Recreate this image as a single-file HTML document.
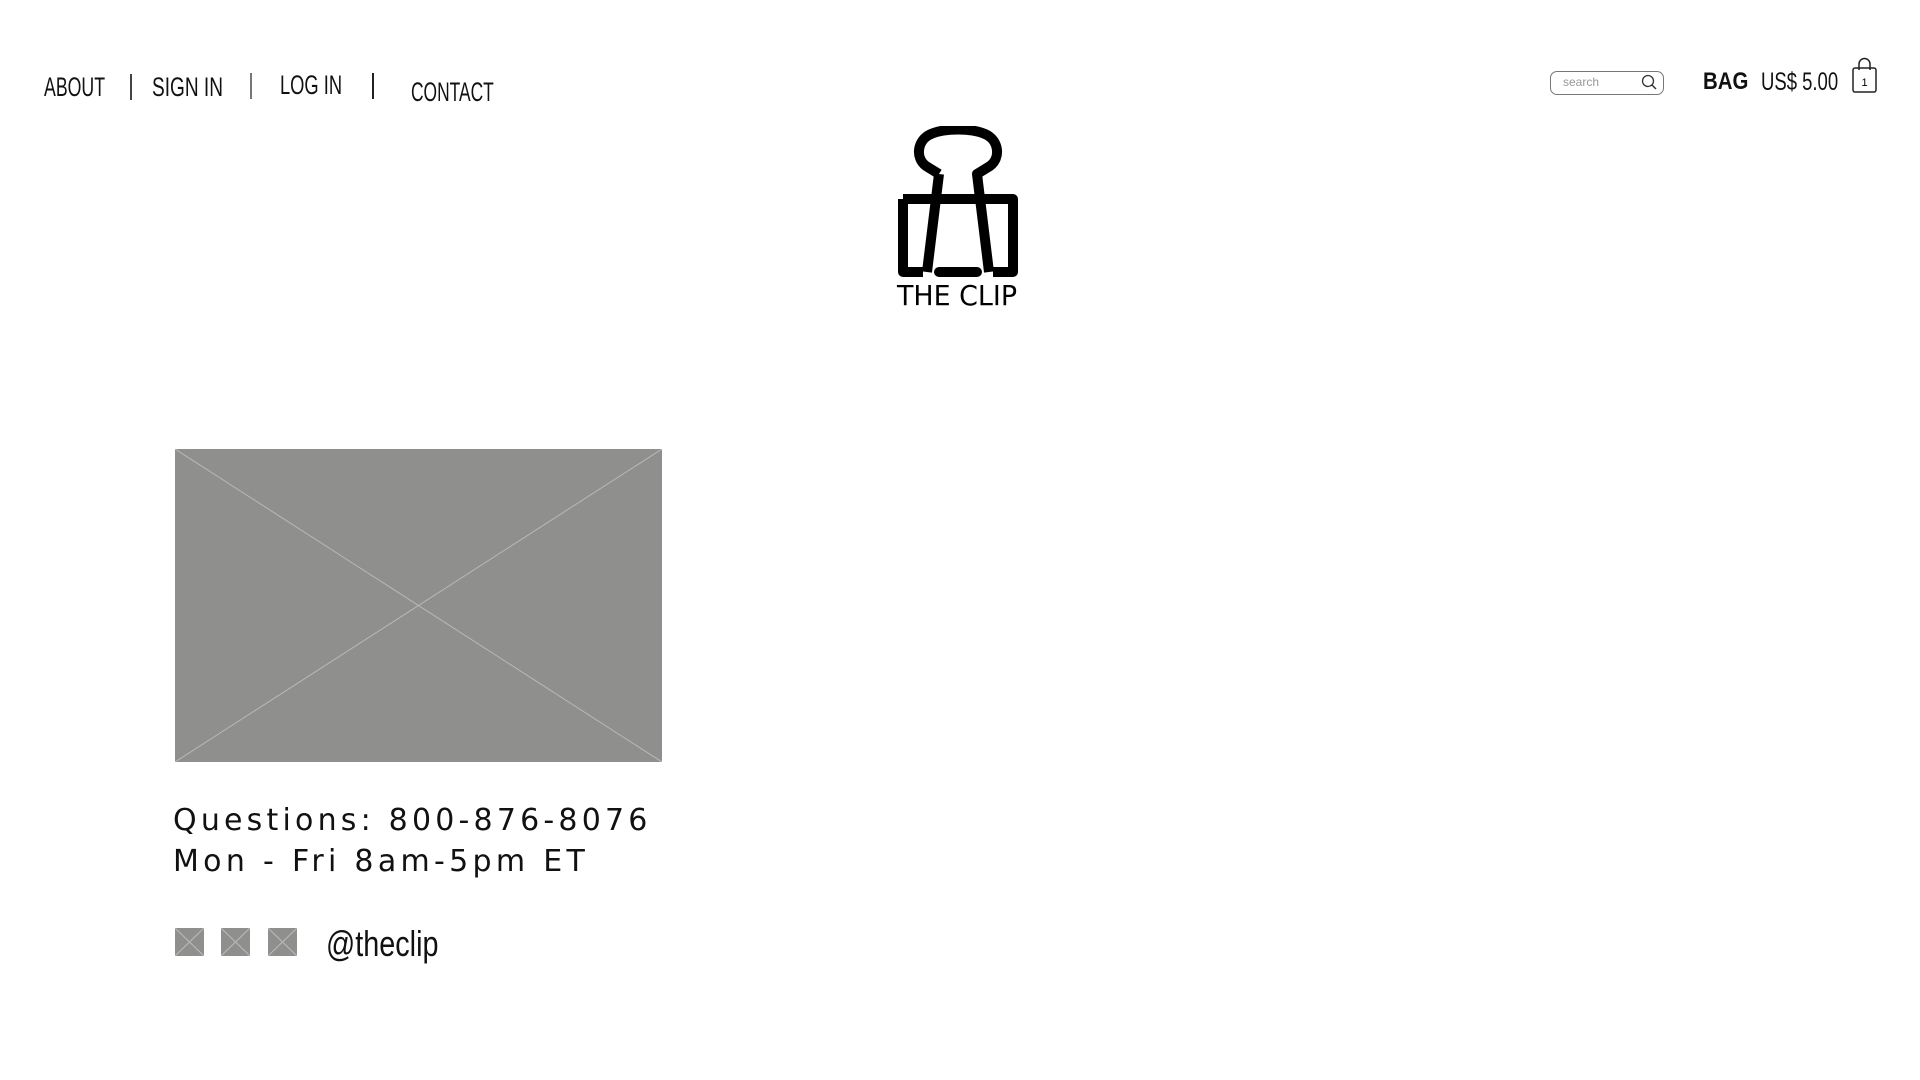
<!DOCTYPE html>
<html><head><meta charset="utf-8"><style>
body{margin:0;width:1920px;height:1080px;background:#fff;position:relative;overflow:hidden;font-family:"Liberation Sans",sans-serif;color:#111}
.a{position:absolute;white-space:nowrap;line-height:1}
.n{font-family:"Liberation Sans",sans-serif;transform-origin:0 0}
.sep{position:absolute;width:2px;height:26px;background:#555}
.ph{position:absolute;background:#8f8f8e}
</style></head><body>
<div class="a n" style="left:44px;top:74px;font-size:27px;transform:scaleX(.656)">ABOUT</div>
<div class="sep" style="left:130px;top:74px;background:#444"></div>
<div class="a n" style="left:152px;top:74px;font-size:27px;transform:scaleX(.706)">SIGN IN</div>
<div class="sep" style="left:250px;top:73px;background:#777"></div>
<div class="a n" style="left:280px;top:72px;font-size:27px;transform:scaleX(.678)">LOG IN</div>
<div class="sep" style="left:372px;top:73px;background:#222"></div>
<div class="a n" style="left:411px;top:79px;font-size:27px;transform:scaleX(.644)">CONTACT</div>

<div style="position:absolute;left:1550px;top:71px;width:112px;height:22px;border:1.5px solid #777;border-radius:7px"></div>
<div class="a" style="left:1563px;top:76px;font-size:12px;color:#999">search</div>
<svg style="position:absolute;left:1640px;top:72px" width="20" height="20" viewBox="0 0 20 20"><circle cx="8" cy="9" r="5.5" fill="none" stroke="#333" stroke-width="1.3"/><line x1="12" y1="13" x2="16" y2="17" stroke="#333" stroke-width="1.5"/></svg>
<div class="a" style="left:1703px;top:70px;font-size:24px;font-weight:bold;transform:scaleX(.85);transform-origin:0 0">BAG</div>
<div class="a n" style="left:1761px;top:70px;font-size:25px;transform:scaleX(.74)">US$ 5.00</div>
<svg style="position:absolute;left:1850px;top:56px" width="30" height="38" viewBox="0 0 30 38"><rect x="3" y="12" width="23" height="24" rx="2" fill="none" stroke="#222" stroke-width="1.5"/><path d="M9 14V8a5.5 5.5 0 0 1 11 0v6" fill="none" stroke="#222" stroke-width="1.5"/><text x="14.5" y="30" font-size="11" text-anchor="middle" font-family="Liberation Sans">1</text></svg>

<svg style="position:absolute;left:895px;top:126px" width="126" height="155" viewBox="0 0 126 155">
<path d="M44 48 L31 40 C20 32 22 14 36 8 C50 2 76 2 90 8 C104 14 106 32 95 40 L82 48 L94 146 M44 48 L32 146" fill="none" stroke="#000" stroke-width="10" stroke-linejoin="round"/>
<path d="M8 73 H118 V146 H98 M8 73 V146 H28" fill="none" stroke="#000" stroke-width="10" stroke-linejoin="round"/>
<line x1="44" y1="146" x2="82" y2="146" stroke="#000" stroke-width="10" stroke-linecap="round"/>
</svg>
<div class="a" style="left:897px;top:282px;font-size:28px;font-family:'DejaVu Sans',sans-serif;transform:scaleX(.96);transform-origin:0 0;color:#000">THE CLIP</div>

<svg class="ph" style="left:175px;top:449px" width="487" height="313"><line x1="0" y1="0" x2="487" y2="313" stroke="#b8b8b8" stroke-width="1"/><line x1="487" y1="0" x2="0" y2="313" stroke="#b8b8b8" stroke-width="1"/></svg>

<div class="a" style="left:173px;top:806px;font-size:30px;font-family:'DejaVu Sans',sans-serif;letter-spacing:4.2px;color:#111">Questions: 800-876-8076</div>
<div class="a" style="left:173px;top:847px;font-size:30px;font-family:'DejaVu Sans',sans-serif;letter-spacing:4.3px;color:#111">Mon - Fri 8am-5pm ET</div>

<svg class="ph" style="left:175px;top:928px" width="29" height="28"><path d="M0 0L29 28M29 0L0 28" stroke="#bbb"/></svg>
<svg class="ph" style="left:221px;top:928px" width="29" height="28"><path d="M0 0L29 28M29 0L0 28" stroke="#bbb"/></svg>
<svg class="ph" style="left:268px;top:928px" width="29" height="28"><path d="M0 0L29 28M29 0L0 28" stroke="#bbb"/></svg>
<div class="a n" style="left:326px;top:926px;font-size:36px;transform:scaleX(.8)">@theclip</div>
</body></html>
